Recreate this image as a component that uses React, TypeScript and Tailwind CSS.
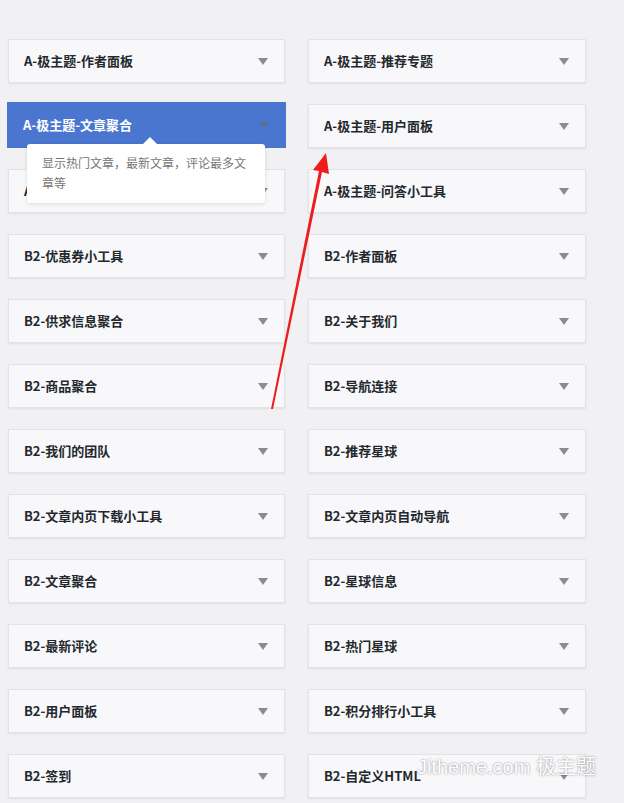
import React from 'react'

const left = [
  'A-极主题-作者面板',
  'A-极主题-文章聚合',
  'A-极主题-热门文章',
  'B2-优惠券小工具',
  'B2-供求信息聚合',
  'B2-商品聚合',
  'B2-我们的团队',
  'B2-文章内页下载小工具',
  'B2-文章聚合',
  'B2-最新评论',
  'B2-用户面板',
  'B2-签到',
]

const right = [
  'A-极主题-推荐专题',
  'A-极主题-用户面板',
  'A-极主题-问答小工具',
  'B2-作者面板',
  'B2-关于我们',
  'B2-导航连接',
  'B2-推荐星球',
  'B2-文章内页自动导航',
  'B2-星球信息',
  'B2-热门星球',
  'B2-积分排行小工具',
  'B2-自定义HTML',
]

const font = { fontFamily: '"Noto Sans CJK SC", "Noto Sans", sans-serif' }

function Caret({ active }: { active?: boolean }) {
  return (
    <span
      className={
        'h-0 w-0 border-x-[5px] border-t-[7px] border-x-transparent ' +
        (active ? 'border-t-[#5b6e96]' : 'border-t-[#8a8c90]')
      }
    />
  )
}

function Widget({ title, active }: { title: string; active?: boolean }) {
  if (active) {
    return (
      <div className="relative -mx-px -my-[2px] flex h-[46px] items-center justify-between bg-[#4a76d0] pl-[16px] pr-[17px]">
        <span className="text-[13px] font-bold text-white">{title}</span>
        <Caret active />
        <div className="absolute left-[20px] top-[42px] z-10 w-[238px] rounded-[3px] bg-white px-[15px] pb-[10px] pt-[9px] shadow-[0_1px_4px_rgba(0,0,0,0.12)]">
          <span className="absolute -top-[7px] left-[115px] h-0 w-0 border-x-[8px] border-b-[8px] border-x-transparent border-b-white" />
          <p className="text-[12px] leading-[20px] text-[#777]">显示热门文章，最新文章，评论最多文章等</p>
        </div>
      </div>
    )
  }
  return (
    <div className="flex h-[44px] items-center justify-between border border-[#e1e3e7] bg-[#f8f8fa] pl-[15px] pr-[16px] shadow-[0_1px_2px_rgba(0,0,0,0.07)]">
      <span className="text-[13px] font-bold text-[#23282d]">{title}</span>
      <Caret />
    </div>
  )
}

export default function App() {
  return (
    <div className="relative h-[803px] w-[624px] overflow-hidden bg-[#f1f1f4]" style={font}>
      <div className="grid grid-cols-[277px_278px] gap-x-[23px] gap-y-[21px] pl-[8px] pt-[39px]">
        {left.map((t, i) => (
          <React.Fragment key={t}>
            <div className="col-start-1" style={{ gridRow: i + 1 }}>
              <Widget title={t} active={i === 1} />
            </div>
            <div className="col-start-2" style={{ gridRow: i + 1 }}>
              <Widget title={right[i]} />
            </div>
          </React.Fragment>
        ))}
      </div>

      <svg className="pointer-events-none absolute left-0 top-0 z-20" width="624" height="803">
        <polygon points="271,409 273,409 322,172 329,174 326,153 313,170 319,171" fill="#ee1c1c" />
      </svg>

      <div className="pointer-events-none absolute left-[417px] top-[752px] z-30 text-[20px] text-white [text-shadow:0_0_2px_rgba(0,0,0,0.5)]" style={{ fontFamily: '"Liberation Sans", "Noto Sans CJK SC", sans-serif' }}>
        Jitheme.com 极主题
      </div>
    </div>
  )
}
